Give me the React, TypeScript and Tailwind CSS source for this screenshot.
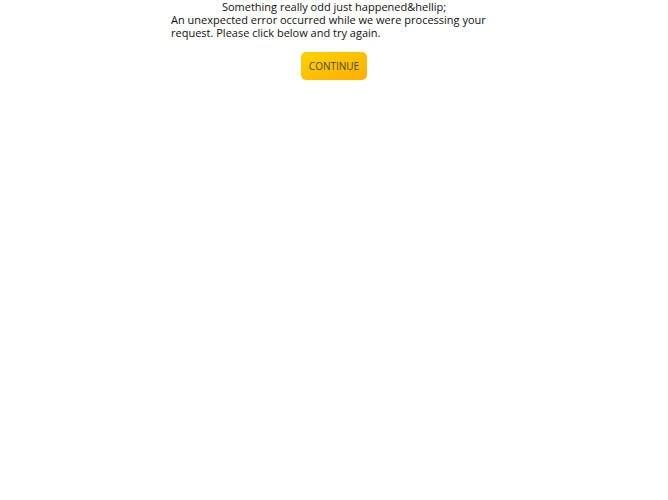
export default function App() {
  return (
    <div className="w-full bg-white font-['Open_Sans',sans-serif] text-[#111]">
      <div className="mx-auto w-[326px]">
        <h1 className="text-center text-[11px] leading-[13px] font-normal">
          Something really odd just happened&amp;hellip;
        </h1>
        <p className="text-[11px] leading-[13px]">
          An unexpected error occurred while we were processing your request. Please click below and try again.
        </p>
        <div className="flex justify-center mt-[13px]">
          <button className="h-[28px] w-[66px] rounded-[5px] bg-gradient-to-br from-[#ffd200] to-[#ffae00] text-[10px] text-[#3d4a2c]">
            CONTINUE
          </button>
        </div>
      </div>
    </div>
  );
}
